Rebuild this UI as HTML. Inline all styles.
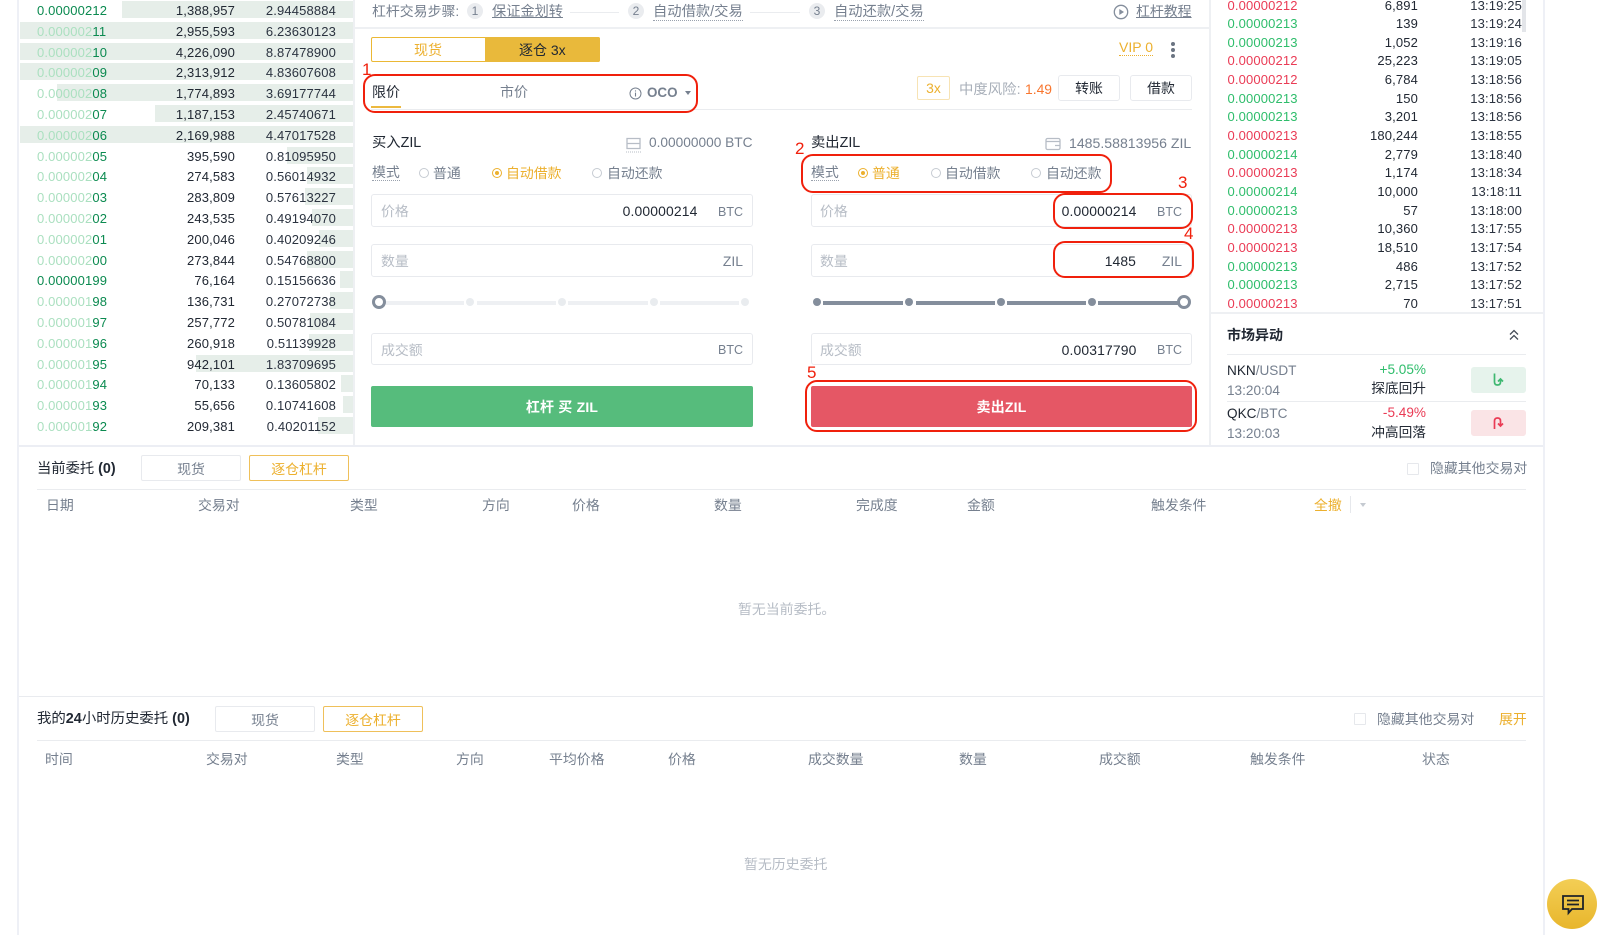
<!DOCTYPE html>
<html lang="zh">
<head>
<meta charset="utf-8">
<title>杠杆交易</title>
<style>
html,body{margin:0;padding:0;background:#fff}
body{position:relative;width:1600px;height:935px;overflow:hidden;font-family:"Liberation Sans","Noto Sans CJK SC",sans-serif;font-size:13.9px;color:#212833}
.a{position:absolute}
.t{position:absolute;white-space:nowrap;line-height:16px}
.g{color:#76808f}.p{color:#b7bdc6}.o{color:#ecb02e}
.u{font-size:12.5px}
.du{border-bottom:1px dotted #9aa2ae;line-height:15px}
.ul{text-decoration:underline}
.r{position:absolute;left:0;width:353px;height:17px;line-height:20px;font-size:13px;letter-spacing:.15px}
.r i{position:absolute;top:0;bottom:0;right:0;background:#e6eee9}
.r span{position:absolute}
.r .x{left:37px;color:#0b8a50}.r .x em{font-style:normal;color:#abe0c0}
.r .y{right:118px}.r .z{right:17px;color:#2b3340}
.s{position:absolute;left:0;width:1600px;height:17px;line-height:17px;font-size:13px;letter-spacing:.15px}
.s span{position:absolute}
.s .x{left:1227.5px}.s .y{right:182px}.s .z{right:78px;color:#2b3340}
.gr{color:#2ebd6b}.rd{color:#ea3b55}
.c{position:absolute;width:16px;height:16px;border-radius:50%;background:#eaecef;color:#76808f;text-align:center;line-height:16px;font-size:12px;top:2.5px}
.hl{position:absolute;height:1px;background:#eaecef}
.in{position:absolute;border:1px solid #e8eaee;border-radius:3px;box-sizing:border-box}
.rb{position:absolute;box-sizing:border-box;border:2px solid #f0200c;border-radius:12px}
.n{position:absolute;color:#f0200c;font-size:17px;line-height:18px}
.ra{position:absolute;width:10px;height:10px;border:1px solid #c6cbd2;border-radius:50%;box-sizing:border-box;top:168px}
.ra.on{border-color:#ecb02e}
.ra.on:after{content:"";position:absolute;left:2px;top:2px;width:4px;height:4px;border-radius:50%;background:#ecb02e}
.d{position:absolute;width:8px;height:8px;border-radius:50%;top:298px}
.tr{position:absolute;height:4px;top:300.5px}
.k{position:absolute;width:14px;height:14px;border:3.5px solid #848e9c;background:#fff;border-radius:50%;box-sizing:border-box;top:295px}
.tab{position:absolute;box-sizing:border-box;border:1px solid #e8eaee;border-radius:2px;text-align:center;color:#76808f;width:100px;height:26px;line-height:26px}
.tab.on{border-color:#efc05a;color:#ecb02e}
.btn{position:absolute;box-sizing:border-box;border:1px solid #e8eaee;border-radius:3px;text-align:center;width:62px;height:26px;line-height:25px;top:75px}
.cb{position:absolute;width:12px;height:12px;border:1px solid #e6e8ec;border-radius:1px;box-sizing:border-box}
</style>
</head>
<body>
<!-- frame lines -->
<div class="a" style="left:17px;top:0;width:2px;height:935px;background:#eef0f6"></div>
<div class="a" style="left:1543px;top:0;width:2px;height:935px;background:#eef0f6"></div>
<div class="a" style="left:353px;top:0;width:2px;height:445px;background:#eef0f3"></div>
<div class="a" style="left:1209px;top:0;width:2px;height:445px;background:#eef0f3"></div>
<div class="a" style="left:355px;top:27px;width:854px;height:2px;background:#eef0f3"></div>
<div class="a" style="left:19px;top:445px;width:1524px;height:2px;background:#eceef4"></div>
<div class="a" style="left:19px;top:696px;width:1524px;height:1px;background:#e9ebef"></div>

<!-- order book -->
<div class="r" style="top:1px"><i style="left:122px"></i><span class="x">0.00000212</span><span class="y">1,388,957</span><span class="z">2.94458884</span></div>
<div class="r" style="top:21.8px"><i style="left:20px"></i><span class="x"><em>0.000002</em>11</span><span class="y">2,955,593</span><span class="z">6.23630123</span></div>
<div class="r" style="top:42.6px"><i style="left:20px"></i><span class="x"><em>0.000002</em>10</span><span class="y">4,226,090</span><span class="z">8.87478900</span></div>
<div class="r" style="top:63.4px"><i style="left:20px"></i><span class="x"><em>0.000002</em>09</span><span class="y">2,313,912</span><span class="z">4.83607608</span></div>
<div class="r" style="top:84.2px"><i style="left:57px"></i><span class="x"><em>0.000002</em>08</span><span class="y">1,774,893</span><span class="z">3.69177744</span></div>
<div class="r" style="top:105px"><i style="left:155px"></i><span class="x"><em>0.000002</em>07</span><span class="y">1,187,153</span><span class="z">2.45740671</span></div>
<div class="r" style="top:125.8px"><i style="left:20px"></i><span class="x"><em>0.000002</em>06</span><span class="y">2,169,988</span><span class="z">4.47017528</span></div>
<div class="r" style="top:146.6px"><i style="left:287px"></i><span class="x"><em>0.000002</em>05</span><span class="y">395,590</span><span class="z">0.81095950</span></div>
<div class="r" style="top:167.4px"><i style="left:307px"></i><span class="x"><em>0.000002</em>04</span><span class="y">274,583</span><span class="z">0.56014932</span></div>
<div class="r" style="top:188.2px"><i style="left:305px"></i><span class="x"><em>0.000002</em>03</span><span class="y">283,809</span><span class="z">0.57613227</span></div>
<div class="r" style="top:209px"><i style="left:312px"></i><span class="x"><em>0.000002</em>02</span><span class="y">243,535</span><span class="z">0.49194070</span></div>
<div class="r" style="top:229.8px"><i style="left:319px"></i><span class="x"><em>0.000002</em>01</span><span class="y">200,046</span><span class="z">0.40209246</span></div>
<div class="r" style="top:250.6px"><i style="left:307px"></i><span class="x"><em>0.000002</em>00</span><span class="y">273,844</span><span class="z">0.54768800</span></div>
<div class="r" style="top:271.4px"><i style="left:340px"></i><span class="x">0.00000199</span><span class="y">76,164</span><span class="z">0.15156636</span></div>
<div class="r" style="top:292.2px"><i style="left:330px"></i><span class="x"><em>0.000001</em>98</span><span class="y">136,731</span><span class="z">0.27072738</span></div>
<div class="r" style="top:313px"><i style="left:310px"></i><span class="x"><em>0.000001</em>97</span><span class="y">257,772</span><span class="z">0.50781084</span></div>
<div class="r" style="top:333.8px"><i style="left:309px"></i><span class="x"><em>0.000001</em>96</span><span class="y">260,918</span><span class="z">0.51139928</span></div>
<div class="r" style="top:354.6px"><i style="left:196px"></i><span class="x"><em>0.000001</em>95</span><span class="y">942,101</span><span class="z">1.83709695</span></div>
<div class="r" style="top:375.4px"><i style="left:341px"></i><span class="x"><em>0.000001</em>94</span><span class="y">70,133</span><span class="z">0.13605802</span></div>
<div class="r" style="top:396.2px"><i style="left:343px"></i><span class="x"><em>0.000001</em>93</span><span class="y">55,656</span><span class="z">0.10741608</span></div>
<div class="r" style="top:417px"><i style="left:318px"></i><span class="x"><em>0.000001</em>92</span><span class="y">209,381</span><span class="z">0.40201152</span></div>

<!-- steps -->
<div class="t g" style="left:372px;top:3px">杠杆交易步骤:</div>
<div class="c" style="left:467px">1</div>
<div class="t g ul" style="left:492px;top:4px;font-size:14.2px">保证金划转</div>
<div class="hl" style="left:570px;top:12px;width:49px"></div>
<div class="c" style="left:628px">2</div>
<div class="t g du" style="left:653px;top:5px;font-size:14.3px">自动借款/交易</div>
<div class="hl" style="left:750px;top:12px;width:50px"></div>
<div class="c" style="left:809px">3</div>
<div class="t g du" style="left:834px;top:5px;font-size:14.3px">自动还款/交易</div>
<svg class="a" style="left:1113px;top:4px" width="16" height="16" viewBox="0 0 16 16"><circle cx="8" cy="8" r="6.7" fill="none" stroke="#848e9c" stroke-width="1.3"/><path d="M6.3 5v6l4.7-3z" fill="#848e9c"/></svg>
<div class="t g ul" style="left:1136px;top:3px">杠杆教程</div>

<!-- toggle -->
<div class="a" style="left:371px;top:37px;width:229px;height:25px;box-sizing:border-box;border:1px solid #ebb835;border-radius:2px;background:#fff"></div>
<div class="a" style="left:485px;top:37px;width:115px;height:25px;background:#e9b93b;border-radius:0 2px 2px 0"></div>
<div class="t o" style="left:414px;top:41.5px;font-size:14px">现货</div>
<div class="t" style="left:519px;top:41.5px;font-size:14px">逐仓 3x</div>
<div class="t o du" style="left:1119px;top:40px;font-size:14px;border-color:#ecb02e">VIP 0</div>
<div class="a" style="left:1171px;top:42px;width:4px;height:4px;border-radius:50%;background:#6b7482"></div>
<div class="a" style="left:1171px;top:48px;width:4px;height:4px;border-radius:50%;background:#6b7482"></div>
<div class="a" style="left:1171px;top:54px;width:4px;height:4px;border-radius:50%;background:#6b7482"></div>

<!-- order type tabs -->
<div class="hl" style="left:371px;top:108.5px;width:821px"></div>
<div class="t" style="left:372px;top:84px;font-size:14px">限价</div>
<div class="a" style="left:371px;top:106px;width:30px;height:2px;background:#ecb93f"></div>
<div class="t g" style="left:500px;top:84px;font-size:14px">市价</div>
<svg class="a" style="left:629px;top:87px" width="13" height="13" viewBox="0 0 13 13"><circle cx="6.5" cy="6.5" r="5.5" fill="none" stroke="#76808f"/><path d="M6.5 5.6v3.9M6.5 3.4v1.1" stroke="#76808f" stroke-width="1.1"/></svg>
<div class="t g" style="left:647px;top:85px;font-size:13.4px;font-weight:700">OCO</div>
<div class="a" style="left:685px;top:91px;border:3px solid transparent;border-top:4px solid #76808f;border-bottom:0"></div>
<div class="a" style="left:917px;top:76px;width:33px;height:24px;box-sizing:border-box;border:1px solid #f7e3b4;border-radius:2px;text-align:center;line-height:23px;color:#ecb02e">3x</div>
<div class="t" style="left:959px;top:82px;color:#a8afb9;font-size:14.4px">中度风险:</div>
<div class="t" style="left:1025px;top:81px;color:#f8762f">1.49</div>
<div class="btn" style="left:1058px">转账</div>
<div class="btn" style="left:1130px">借款</div>

<!-- buy column -->
<div class="t" style="left:372px;top:135px;font-size:14.3px">买入ZIL</div>
<svg class="a" style="left:626px;top:137px" width="15" height="16" viewBox="0 0 15 16"><path d="M1 1.5h13v10H1zM1 6.5h13" fill="none" stroke="#b7bdc6" stroke-width="1.3"/><path d="M0 15h15" stroke="#b7bdc6" stroke-dasharray="1 1"/></svg>
<div class="t g" style="left:649px;top:135px;font-size:13.7px">0.00000000 BTC</div>
<div class="t g du" style="left:372px;top:165px">模式</div>
<div class="ra" style="left:419px"></div><div class="t g" style="left:433px;top:165px">普通</div>
<div class="ra on" style="left:492px"></div><div class="t o" style="left:506px;top:165px">自动借款</div>
<div class="ra" style="left:592px"></div><div class="t g" style="left:607px;top:165px">自动还款</div>

<div class="in" style="left:371px;top:194px;width:382px;height:33px"></div>
<div class="t p" style="left:381px;top:203px">价格</div>
<div class="t" style="right:902.5px;top:203px;letter-spacing:.15px">0.00000214</div>
<div class="t g u" style="right:857px;top:204px">BTC</div>
<div class="in" style="left:371px;top:244px;width:382px;height:33px"></div>
<div class="t p" style="left:381px;top:253px">数量</div>
<div class="t g" style="right:857px;top:253px">ZIL</div>

<div class="tr" style="left:386px;width:78px;background:#eef0f3"></div>
<div class="tr" style="left:477px;width:79px;background:#eef0f3"></div>
<div class="tr" style="left:568px;width:80px;background:#eef0f3"></div>
<div class="tr" style="left:660px;width:79px;background:#eef0f3"></div>
<div class="d" style="left:466px;background:#e9ecef"></div>
<div class="d" style="left:558px;background:#e9ecef"></div>
<div class="d" style="left:650px;background:#e9ecef"></div>
<div class="d" style="left:741px;background:#e9ecef"></div>
<div class="k" style="left:372px"></div>

<div class="in" style="left:371px;top:333px;width:382px;height:32px"></div>
<div class="t p" style="left:381px;top:342px">成交额</div>
<div class="t g u" style="right:857px;top:342px">BTC</div>
<div class="a" style="left:371px;top:386px;width:382px;height:41px;background:#56bc7c;border-radius:2px;text-align:center;color:#fff;font-weight:700;line-height:43px;font-size:14px;letter-spacing:.2px">杠杆 买 ZIL</div>

<!-- sell column -->
<div class="t" style="left:811px;top:135px;font-size:14.3px">卖出ZIL</div>
<svg class="a" style="left:1045px;top:137px" width="16" height="14" viewBox="0 0 16 14"><rect x="1" y="1.5" width="14" height="11" rx="1.5" fill="none" stroke="#b7bdc6" stroke-width="1.3"/><path d="M1 4.5h14M10 8.5h5" fill="none" stroke="#b7bdc6" stroke-width="1.3"/></svg>
<div class="t g" style="left:1069px;top:135px;font-size:14.1px">1485.58813956 ZIL</div>
<div class="t g du" style="left:811px;top:165px">模式</div>
<div class="ra on" style="left:858px"></div><div class="t o" style="left:872px;top:165px">普通</div>
<div class="ra" style="left:931px"></div><div class="t g" style="left:945px;top:165px">自动借款</div>
<div class="ra" style="left:1031px"></div><div class="t g" style="left:1046px;top:165px">自动还款</div>

<div class="in" style="left:811px;top:194px;width:381px;height:33px"></div>
<div class="t p" style="left:820px;top:203px">价格</div>
<div class="t" style="right:463.5px;top:203px;letter-spacing:.15px">0.00000214</div>
<div class="t g u" style="right:418px;top:204px">BTC</div>
<div class="in" style="left:811px;top:244px;width:381px;height:33px"></div>
<div class="t p" style="left:820px;top:253px">数量</div>
<div class="t" style="right:464px;top:253px;letter-spacing:.1px">1485</div>
<div class="t g" style="right:418px;top:253px">ZIL</div>

<div class="tr" style="left:823px;width:80px;background:#848e9c"></div>
<div class="tr" style="left:916px;width:79px;background:#848e9c"></div>
<div class="tr" style="left:1007px;width:79px;background:#848e9c"></div>
<div class="tr" style="left:1098px;width:80px;background:#848e9c"></div>
<div class="d" style="left:813px;background:#848e9c"></div>
<div class="d" style="left:905px;background:#848e9c"></div>
<div class="d" style="left:997px;background:#848e9c"></div>
<div class="d" style="left:1088px;background:#848e9c"></div>
<div class="k" style="left:1177px"></div>

<div class="in" style="left:811px;top:333px;width:381px;height:32px"></div>
<div class="t p" style="left:820px;top:342px">成交额</div>
<div class="t" style="right:463.5px;top:342px;letter-spacing:.15px">0.00317790</div>
<div class="t g u" style="right:418px;top:342px">BTC</div>
<div class="a" style="left:811px;top:386px;width:381px;height:41px;background:#e55765;border-radius:2px;text-align:center;color:#fff;font-weight:700;line-height:43px;font-size:14px;letter-spacing:.2px">卖出ZIL</div>

<!-- red annotations -->
<div class="rb" style="left:363px;top:74px;width:335px;height:39px"></div>
<div class="n" style="left:362px;top:61px">1</div>
<div class="rb" style="left:801px;top:154px;width:311px;height:39px"></div>
<div class="n" style="left:795px;top:140px">2</div>
<div class="rb" style="left:1053px;top:193px;width:140px;height:36px"></div>
<div class="n" style="left:1178px;top:174px">3</div>
<div class="rb" style="left:1053px;top:241px;width:141px;height:37px"></div>
<div class="n" style="left:1184px;top:225px">4</div>
<div class="rb" style="left:805px;top:380px;width:392px;height:52px"></div>
<div class="n" style="left:807px;top:364px">5</div>

<!-- trades -->
<div class="a" style="left:1522px;top:0;width:4px;height:32px;background:#e3e5e9"></div>
<div class="s" style="top:-3.5px"><span class="x rd">0.00000212</span><span class="y">6,891</span><span class="z">13:19:25</span></div>
<div class="s" style="top:15.15px"><span class="x gr">0.00000213</span><span class="y">139</span><span class="z">13:19:24</span></div>
<div class="s" style="top:33.8px"><span class="x gr">0.00000213</span><span class="y">1,052</span><span class="z">13:19:16</span></div>
<div class="s" style="top:52.45px"><span class="x rd">0.00000212</span><span class="y">25,223</span><span class="z">13:19:05</span></div>
<div class="s" style="top:71.1px"><span class="x rd">0.00000212</span><span class="y">6,784</span><span class="z">13:18:56</span></div>
<div class="s" style="top:89.75px"><span class="x gr">0.00000213</span><span class="y">150</span><span class="z">13:18:56</span></div>
<div class="s" style="top:108.4px"><span class="x gr">0.00000213</span><span class="y">3,201</span><span class="z">13:18:56</span></div>
<div class="s" style="top:127.05px"><span class="x rd">0.00000213</span><span class="y">180,244</span><span class="z">13:18:55</span></div>
<div class="s" style="top:145.7px"><span class="x gr">0.00000214</span><span class="y">2,779</span><span class="z">13:18:40</span></div>
<div class="s" style="top:164.35px"><span class="x rd">0.00000213</span><span class="y">1,174</span><span class="z">13:18:34</span></div>
<div class="s" style="top:183px"><span class="x gr">0.00000214</span><span class="y">10,000</span><span class="z">13:18:11</span></div>
<div class="s" style="top:201.65px"><span class="x gr">0.00000213</span><span class="y">57</span><span class="z">13:18:00</span></div>
<div class="s" style="top:220.3px"><span class="x rd">0.00000213</span><span class="y">10,360</span><span class="z">13:17:55</span></div>
<div class="s" style="top:238.95px"><span class="x rd">0.00000213</span><span class="y">18,510</span><span class="z">13:17:54</span></div>
<div class="s" style="top:257.6px"><span class="x gr">0.00000213</span><span class="y">486</span><span class="z">13:17:52</span></div>
<div class="s" style="top:276.25px"><span class="x gr">0.00000213</span><span class="y">2,715</span><span class="z">13:17:52</span></div>
<div class="s" style="top:294.9px"><span class="x rd">0.00000213</span><span class="y">70</span><span class="z">13:17:51</span></div>

<!-- market movers -->
<div class="a" style="left:1211px;top:312px;width:332px;height:2px;background:#eef0f3"></div>
<div class="t" style="left:1227px;top:326.5px;font-size:14px;font-weight:700">市场异动</div>
<svg class="a" style="left:1509px;top:329px" width="10" height="12" viewBox="0 0 10 12"><path d="M1 5.5l4-4 4 4M1 10.5l4-4 4 4" fill="none" stroke="#444c58" stroke-width="1.3"/></svg>
<div class="hl" style="left:1227px;top:354px;width:299px"></div>
<div class="t" style="left:1227px;top:362.5px;font-size:13.6px">NKN<span class="g">/USDT</span></div>
<div class="t g" style="left:1227px;top:383px;font-size:13.6px">13:20:04</div>
<div class="t gr" style="right:174px;top:362px;font-size:13.6px">+5.05%</div>
<div class="t" style="right:174px;top:381px;font-size:13.7px">探底回升</div>
<div class="a" style="left:1471px;top:367px;width:55px;height:26px;border-radius:3px;background:#e6f3ec"></div>
<svg class="a" style="left:1491px;top:372px" width="15" height="16" viewBox="0 0 15 16"><path d="M3.5 1.5v8.5q0 3 3 3 3 0 3-3V7M7 9.5l2.5-2.5L12 9.5" fill="none" stroke="#3fb871" stroke-width="1.7"/></svg>
<div class="hl" style="left:1227px;top:401px;width:299px"></div>
<div class="t" style="left:1227px;top:405.5px;font-size:13.6px">QKC<span class="g">/BTC</span></div>
<div class="t g" style="left:1227px;top:426px;font-size:13.6px">13:20:03</div>
<div class="t rd" style="right:174px;top:405px;font-size:13.6px">-5.49%</div>
<div class="t" style="right:174px;top:424.5px;font-size:13.7px">冲高回落</div>
<div class="a" style="left:1471px;top:410px;width:55px;height:26px;border-radius:3px;background:#fae4e6"></div>
<svg class="a" style="left:1491px;top:415px" width="15" height="16" viewBox="0 0 15 16"><path d="M3.5 14V6q0-3 3-3 3 0 3 3v5M7 8.5l2.5 2.5L12 8.5" fill="none" stroke="#ea3b55" stroke-width="1.7"/></svg>

<!-- current orders -->
<div class="t" style="left:37px;top:461px;font-size:14.3px">当前委托 <b style="font-weight:700">(0)</b></div>
<div class="tab" style="left:141px;top:455px">现货</div>
<div class="tab on" style="left:249px;top:455px">逐仓杠杆</div>
<div class="cb" style="left:1407px;top:463px"></div>
<div class="t g" style="left:1430px;top:460px">隐藏其他交易对</div>
<div class="hl" style="left:37px;top:489px;width:1489px"></div>
<div class="t g" style="left:46px;top:497px">日期</div>
<div class="t g" style="left:198px;top:497px">交易对</div>
<div class="t g" style="left:350px;top:497px">类型</div>
<div class="t g" style="left:482px;top:497px">方向</div>
<div class="t g" style="left:572px;top:497px">价格</div>
<div class="t g" style="left:714px;top:497px">数量</div>
<div class="t g" style="left:856px;top:497px">完成度</div>
<div class="t g" style="left:967px;top:497px">金额</div>
<div class="t g" style="left:1151px;top:497px">触发条件</div>
<div class="t o" style="left:1314px;top:497px">全撤</div>
<div class="a" style="left:1350px;top:496px;width:1px;height:17px;background:#e6e8ec"></div>
<div class="a" style="left:1360px;top:503px;border:3px solid transparent;border-top:4px solid #c5cad1;border-bottom:0"></div>
<div class="t p" style="left:738px;top:601px">暂无当前委托。</div>

<!-- history -->
<div class="t" style="left:37px;top:710.5px;font-size:14.4px">我的<b>24</b>小时历史委托 <b>(0)</b></div>
<div class="tab" style="left:215px;top:706px">现货</div>
<div class="tab on" style="left:323px;top:706px">逐仓杠杆</div>
<div class="cb" style="left:1354px;top:713px"></div>
<div class="t g" style="left:1377px;top:711px">隐藏其他交易对</div>
<div class="t o" style="left:1499px;top:711px">展开</div>
<div class="hl" style="left:37px;top:740px;width:1489px"></div>
<div class="t g" style="left:45px;top:751px">时间</div>
<div class="t g" style="left:206px;top:751px">交易对</div>
<div class="t g" style="left:336px;top:751px">类型</div>
<div class="t g" style="left:456px;top:751px">方向</div>
<div class="t g" style="left:549px;top:751px">平均价格</div>
<div class="t g" style="left:668px;top:751px">价格</div>
<div class="t g" style="left:808px;top:751px">成交数量</div>
<div class="t g" style="left:959px;top:751px">数量</div>
<div class="t g" style="left:1099px;top:751px">成交额</div>
<div class="t g" style="left:1250px;top:751px">触发条件</div>
<div class="t g" style="left:1422px;top:751px">状态</div>
<div class="t p" style="left:744px;top:856px">暂无历史委托</div>

<!-- chat -->
<div class="a" style="left:1547px;top:879px;width:50px;height:50px;border-radius:50%;background:linear-gradient(#f3ce55,#e8b62c)"></div>
<svg class="a" style="left:1562px;top:895px" width="22" height="21" viewBox="0 0 22 21"><path d="M1 1h20v13H10l-3.5 4v-4H1z" fill="none" stroke="#1e2329" stroke-width="1.8"/><path d="M5 5.5h12M5 9.5h12" stroke="#1e2329" stroke-width="1.8"/></svg>
</body>
</html>
